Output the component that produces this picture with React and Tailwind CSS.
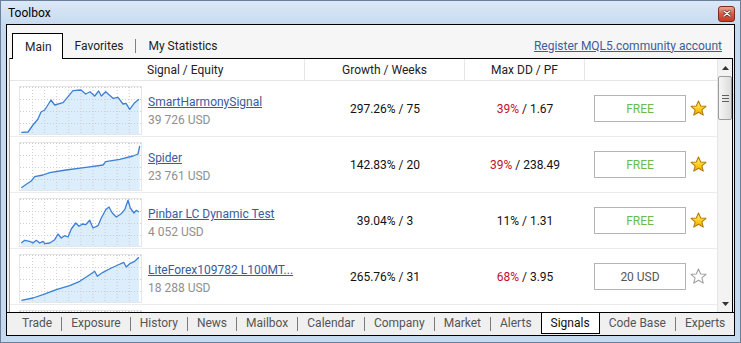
import React from "react";

const font = { fontFamily: 'Roboto, "Noto Sans", sans-serif' };

const rows = [
  {
    name: "SmartHarmonySignal",
    amount: "39 726 USD",
    growth: "297.26% / 75",
    dd: "39%",
    red: true,
    pf: "1.67",
    price: "FREE",
    fav: true,
    pts: [[2.3,46.3],[9,46],[14,39],[19,33],[22,26],[25.7,24],[32,14],[35.7,19],[44,16.7],[49,10.7],[54,4.7],[62,4],[66.7,8],[71,5.7],[75.7,10],[79.7,5],[82.3,10],[86.7,5.7],[94,12.3],[99,11.3],[104,18],[107,17.3],[110.7,23.3],[115.7,16.7],[120,13.3]],
  },
  {
    name: "Spider",
    amount: "23 761 USD",
    growth: "142.83% / 20",
    dd: "39%",
    red: true,
    pf: "238.49",
    price: "FREE",
    fav: true,
    pts: [[2.3,45.7],[7.3,42.3],[12.3,39],[15.7,34.7],[24,33],[30.7,30.7],[47,28],[67,25.3],[84,23],[86.7,19.7],[100.7,17.3],[114,14],[119,12],[120.7,4]],
  },
  {
    name: "Pinbar LC Dynamic Test",
    amount: "4 052 USD",
    growth: "39.04% / 3",
    dd: "11%",
    red: false,
    pf: "1.31",
    price: "FREE",
    fav: true,
    pts: [[2.3,45],[5.7,42.3],[10.7,43.3],[14,45],[17.3,42.3],[20.7,45],[24,43.3],[25.7,45.7],[30.7,45],[35.7,41.7],[39,36],[42.3,40],[45.7,37.7],[49,39],[52.3,31],[56.7,25],[60,28.3],[63.3,26],[66.7,26.7],[70.7,22.3],[74,30],[79,27.7],[82.3,20],[86.7,11.7],[90,9],[93.3,15],[97.3,19],[102.3,15.7],[105.7,11.7],[109,2.3],[111.3,10],[115,15],[117.3,12.3],[120,14]],
  },
  {
    name: "LiteForex109782 L100MT...",
    amount: "18 288 USD",
    growth: "265.76% / 31",
    dd: "68%",
    red: true,
    pf: "3.95",
    price: "20 USD",
    fav: false,
    pts: [[2.3,46.3],[14,44],[24,40.7],[37.3,35.7],[50.7,31.7],[60.7,27.3],[70.7,20.7],[75.7,17.3],[78.3,22.3],[84,18.3],[92.3,14],[99,11],[104.7,8.3],[107.3,13],[110.7,9.7],[115.7,7.3],[120,3.3]],
  },
  {
    name: "",
    amount: "",
    growth: "",
    dd: "",
    red: false,
    pf: "",
    price: "",
    fav: false,
    pts: [[2,40],[120,10]],
  },
];

function Chart({ pts }) {
  const line = pts.map((p, i) => `${i ? "L" : "M"}${p[0]},${p[1]}`).join(" ");
  const area = `${line} L${pts[pts.length - 1][0]},48 L${pts[0][0]},48 Z`;
  const vx = Array.from({ length: 9 }, (_, k) => 13.5 + 12.1 * k);
  const hy = [1.5, 13.5, 25.5, 37.5];
  return (
    <svg width="123" height="49" viewBox="0 0 123 49" className="shrink-0">
      <rect x="0.5" y="0.5" width="122" height="48" fill="#fff" stroke="#e6e6e6" />
      <path d={area} fill="#dcedfc" />
      {vx.map((x) => (
        <line key={x} x1={x} y1="1" x2={x} y2="48" stroke="#cccccc" strokeDasharray="1 2" />
      ))}
      {hy.map((y) => (
        <line key={y} x1="1" y1={y} x2="122" y2={y} stroke="#cccccc" strokeDasharray="1 2" />
      ))}
      <path d={line} fill="none" stroke="#3d7fd6" strokeWidth="1.3" strokeLinejoin="round" />
    </svg>
  );
}

function Star({ filled }) {
  return (
    <svg width="17" height="17" viewBox="0 0 20 20">
      <defs>
        <linearGradient id="sg" x1="0" y1="0" x2="0" y2="1">
          <stop offset="0" stopColor="#fff3a0" />
          <stop offset="0.5" stopColor="#ffd21e" />
          <stop offset="1" stopColor="#f0a800" />
        </linearGradient>
      </defs>
      <polygon
        points="10,1.2 12.6,7 18.8,7.4 14,11.5 15.6,17.8 10,14.4 4.4,17.8 6,11.5 1.2,7.4 7.4,7"
        fill={filled ? "url(#sg)" : "#fff"}
        stroke={filled ? "#b07a0a" : "#9c9c9c"}
        strokeWidth="1.2"
        strokeLinejoin="round"
      />
    </svg>
  );
}

function TopTabs() {
  return (
    <div className="h-[33px] shrink-0 flex items-end justify-between bg-[#f6f6f6] pl-[5px] pr-[12px]">
      <div className="flex items-end text-[12px] text-[#1e1e1e] whitespace-nowrap">
        <div className="relative z-10 h-[26px] -mb-px bg-white border border-b-0 border-black pl-[12px] pr-[10px] flex items-center">
          Main
        </div>
        <div className="h-[25px] flex items-center pl-[12px] pr-[12px]">Favorites</div>
        <div className="w-px h-[14px] bg-[#808080] mb-[5px]" />
        <div className="h-[25px] flex items-center pl-[12px] pr-[10px]">My Statistics</div>
      </div>
      <a className="h-[25px] flex items-center text-[12px] text-[#3d5c9c] underline whitespace-nowrap">Register MQL5.community account</a>
    </div>
  );
}

function BottomTabs() {
  const tabs = ["Trade", "Exposure", "History", "News", "Mailbox", "Calendar", "Company", "Market", "Alerts", "Signals", "Code Base", "Experts"];
  const out = [];
  tabs.forEach((t, i) => {
    const active = t === "Signals";
    const prevActive = i > 0 && tabs[i - 1] === "Signals";
    if (i > 0 && !active && !prevActive) {
      out.push(<div key={"s" + i} className="w-px h-[14px] shrink-0 bg-[#7a7a7a] mt-[4px]" />);
    }
    out.push(
      active ? (
        <div key={t} className="h-[21px] shrink-0 bg-white border border-t-0 border-black px-[9px] flex items-center text-[#111]">
          {t}
        </div>
      ) : (
        <div key={t} className="h-[20px] shrink-0 px-[9px] flex items-center text-[#555]">
          {t}
        </div>
      )
    );
  });
  return (
    <div className="h-[23px] shrink-0 border-t border-black bg-[#f0f0f0] flex items-start pl-[6px] text-[12px] whitespace-nowrap overflow-hidden">
      {out}
    </div>
  );
}

function Scrollbar() {
  return (
    <div className="w-[15px] shrink-0 bg-[#f3f3f3] border-l border-[#e6e6e6] flex flex-col items-center">
      <div className="h-[17px] w-full flex items-center justify-center">
        <svg width="7" height="4" viewBox="0 0 7 4"><polygon points="3.5,0 7,4 0,4" fill="#333" /></svg>
      </div>
      <div className="h-[44px] w-[14px] rounded-[2px] border border-[#9b9b9b] bg-gradient-to-r from-[#f6f6f6] to-[#dcdcdc] flex flex-col items-center justify-center gap-[2px]">
        <div className="w-[7px] h-px bg-[#606060]" />
        <div className="w-[7px] h-px bg-[#606060]" />
        <div className="w-[7px] h-px bg-[#606060]" />
      </div>
      <div className="flex-1" />
      <div className="h-[17px] w-full flex items-center justify-center">
        <svg width="7" height="4" viewBox="0 0 7 4"><polygon points="0,0 7,0 3.5,4" fill="#333" /></svg>
      </div>
    </div>
  );
}

function Row({ r }) {
  return (
    <div className="h-[56px] shrink-0 flex border-b border-[#ececec]">
      <div className="w-[295px] shrink-0 flex pl-[9px] pt-[5px]">
        <Chart pts={r.pts} />
        <div className="pl-[6px] pt-[8px] flex flex-col gap-[2px] leading-[16px]">
          <a className="text-[12px] text-[#3a5a9e] underline whitespace-nowrap">{r.name}</a>
          <span className="text-[12px] text-[#8f8f8f]">{r.amount}</span>
        </div>
      </div>
      <div className="w-[160px] shrink-0 flex items-center justify-center text-[12px] text-[#111]">{r.growth}</div>
      <div className="w-[120px] shrink-0 flex items-center justify-center text-[12px] text-[#111]">
        {r.dd && (
          <>
            <span className={r.red ? "text-[#c4102c]" : ""}>{r.dd}</span>
            <span>&nbsp;/ {r.pf}</span>
          </>
        )}
      </div>
      <div className="w-[130px] shrink-0 flex items-center pl-[9px] gap-[4px]">
        {r.price && (
          <>
            <div
              className={`w-[92px] h-[27px] border border-[#b4b4b4] bg-white flex items-center justify-center text-[12px] ${
                r.price === "FREE" ? "text-[#6dbb4a]" : "text-[#555]"
              }`}
            >
              {r.price}
            </div>
            <Star filled={r.fav} />
          </>
        )}
      </div>
    </div>
  );
}

export default function App() {
  return (
    <div
      style={font}
      className="w-[741px] h-[343px] overflow-hidden border border-[#6a7f99] bg-[#c5d9ef] flex flex-col"
    >
      <div className="h-[23px] shrink-0 flex items-center justify-between pl-[7px] pr-[5px] bg-gradient-to-b from-[#dbe8f6] to-[#c8dbf0]">
        <span className="text-[12px] text-black">Toolbox</span>
        <div className="w-[17px] h-[16px] mt-[2px] rounded-[3px] border border-[#7d2b1c] bg-gradient-to-b from-[#eaa493] via-[#d25a45] to-[#c43b22] flex items-center justify-center">
          <svg width="8" height="7" viewBox="0 0 8 7">
            <path d="M1,1 L7,6 M7,1 L1,6" stroke="#4a1a10" strokeWidth="2.6" strokeLinecap="round" />
            <path d="M1,1 L7,6 M7,1 L1,6" stroke="#fff" strokeWidth="1.5" strokeLinecap="round" />
          </svg>
        </div>
      </div>
      <div className="flex-1 mx-[5px] mb-[6px] border border-black bg-[#f0f0f0] flex flex-col min-h-0">
        <TopTabs />
        <div className="flex-1 min-h-0 flex ml-[2px] mr-px border-t border-r border-l border-t-black border-r-black border-l-[#a8a8a8] bg-white overflow-hidden">
          <div className="flex-1 flex flex-col overflow-hidden">
            <div className="h-[22px] shrink-0 flex border-b border-[#e6e6e6] text-[12px] text-[#222]">
              <div className="w-[295px] shrink-0 border-r border-[#e6e6e6] flex items-center pl-[137px]">Signal / Equity</div>
              <div className="w-[160px] shrink-0 border-r border-[#e6e6e6] flex items-center justify-center">Growth / Weeks</div>
              <div className="w-[120px] shrink-0 border-r border-[#e6e6e6] flex items-center justify-center">Max DD / PF</div>
              <div className="w-[130px] shrink-0" />
            </div>
            {rows.map((r, i) => (
              <Row key={i} r={r} />
            ))}
          </div>
          <Scrollbar />
        </div>
        <BottomTabs />
      </div>
    </div>
  );
}
